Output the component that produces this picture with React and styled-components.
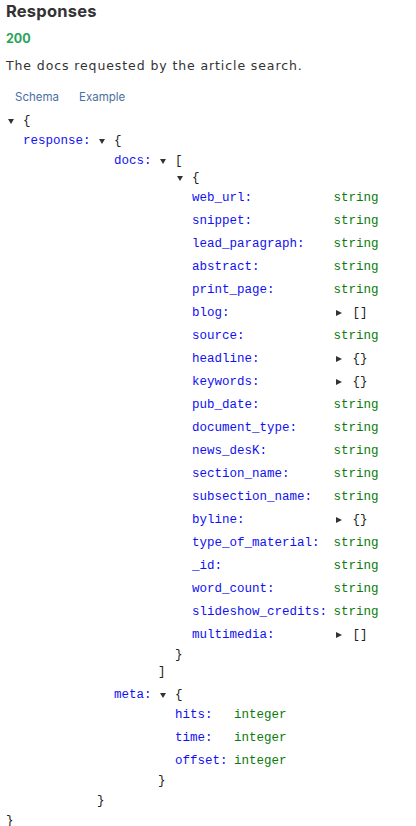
import React from 'react';
import styled, { createGlobalStyle } from 'styled-components';

const GlobalStyle = createGlobalStyle`
  body {
    margin: 0;
    background: #fff;
    font-family: Inter, "Open Sans", sans-serif;
    color: #333;
  }
`;

const docFields = [
  ['web_url', 'string'],
  ['snippet', 'string'],
  ['lead_paragraph', 'string'],
  ['abstract', 'string'],
  ['print_page', 'string'],
  ['blog', { collapsed: '[]' }],
  ['source', 'string'],
  ['headline', { collapsed: '{}' }],
  ['keywords', { collapsed: '{}' }],
  ['pub_date', 'string'],
  ['document_type', 'string'],
  ['news_desK', 'string'],
  ['section_name', 'string'],
  ['subsection_name', 'string'],
  ['byline', { collapsed: '{}' }],
  ['type_of_material', 'string'],
  ['_id', 'string'],
  ['word_count', 'string'],
  ['slideshow_credits', 'string'],
  ['multimedia', { collapsed: '[]' }],
];

const schema = {
  object: [
    ['response', {
      object: [
        ['docs', { array: [{ object: docFields }] }],
        ['meta', {
          object: [
            ['hits', 'integer'],
            ['time', 'integer'],
            ['offset', 'integer'],
          ],
        }],
      ],
    }],
  ],
};

const Value = ({ node }) => {
  if (typeof node === 'string') return <Type>{node}</Type>;

  if (node.collapsed) {
    return (
      <Line>
        <ArrowBox><Arrow /></ArrowBox>
        <Bracket>{node.collapsed}</Bracket>
      </Line>
    );
  }

  const isArray = Boolean(node.array);
  return (
    <div>
      <Line>
        <ArrowBox $open><Arrow $open /></ArrowBox>
        <Bracket>{isArray ? '[' : '{'}</Bracket>
      </Line>
      <Children>
        {isArray ? (
          node.array.map((item, i) => <Value key={i} node={item} />)
        ) : (
          <Fields>
            <tbody>
              {node.object.map(([name, child]) => (
                <tr key={name}>
                  <KeyCell>{name}:</KeyCell>
                  <ValueCell><Value node={child} /></ValueCell>
                </tr>
              ))}
            </tbody>
          </Fields>
        )}
      </Children>
      <Line>
        <Bracket>{isArray ? ']' : '}'}</Bracket>
      </Line>
    </div>
  );
};

const App = () => {
  return (
    <Page>
      <GlobalStyle />
      <Title>Responses</Title>
      <Status>200</Status>
      <Description>The docs requested by the article search.</Description>
      <Tabs>
        <Tab>Schema</Tab>
        <Tab>Example</Tab>
      </Tabs>
      <Tree>
        <Value node={schema} />
      </Tree>
    </Page>
  );
};

export default App;

const Page = styled.div`
  padding: 0 6px;
`;

const Title = styled.h2`
  margin: 0;
  font-size: 16.5px;
  font-weight: 700;
  line-height: 22px;
  color: #333;
  letter-spacing: 0.2px;
`;

const Status = styled.div`
  margin-top: 8.5px;
  font-size: 12.5px;
  font-weight: 700;
  line-height: 16px;
  color: #2aa35a;
`;

const Description = styled.p`
  margin: 10px 0 0;
  font-family: "DejaVu Sans", Inter, sans-serif;
  font-size: 12.5px;
  line-height: 18px;
  letter-spacing: 0.9px;
  color: #333;
`;

const Tabs = styled.div`
  display: flex;
  gap: 20px;
  margin-top: 14.5px;
  padding-left: 9px;
`;

const Tab = styled.span`
  font-size: 11.5px;
  line-height: 16px;
  color: #4a6fa5;
`;

const Tree = styled.div`
  margin-top: 7.5px;
  font-family: "Liberation Mono", "Courier New", monospace;
  font-size: 12.5px;
  line-height: 17px;
`;

const Line = styled.div`
  display: flex;
  align-items: center;
  height: 17px;
  white-space: pre;
`;

const ArrowBox = styled.span`
  display: inline-flex;
  align-items: center;
  width: ${p => (p.$open ? 17 : 19)}px;
  padding-left: 2px;
  box-sizing: border-box;
`;

const Arrow = styled.span`
  display: inline-block;
  width: 0;
  height: 0;
  ${p => p.$open
    ? `
      border-left: 3px solid transparent;
      border-right: 3px solid transparent;
      border-top: 5px solid #333;
    `
    : `
      border-top: 3.5px solid transparent;
      border-bottom: 3.5px solid transparent;
      border-left: 6px solid #333;
    `}
`;

const Bracket = styled.span`
  color: #222;
`;

const Children = styled.div`
  margin-left: 17px;
`;

const Fields = styled.table`
  border-collapse: collapse;
  border-spacing: 0;
  font: inherit;
`;

const KeyCell = styled.td`
  padding: 3px 6.5px 3px 0;
  vertical-align: top;
  color: #1010f0;
  white-space: pre;
`;

const ValueCell = styled.td`
  padding: 3px 0;
  vertical-align: top;
`;

const Type = styled.span`
  color: #0a7a0a;
`;
